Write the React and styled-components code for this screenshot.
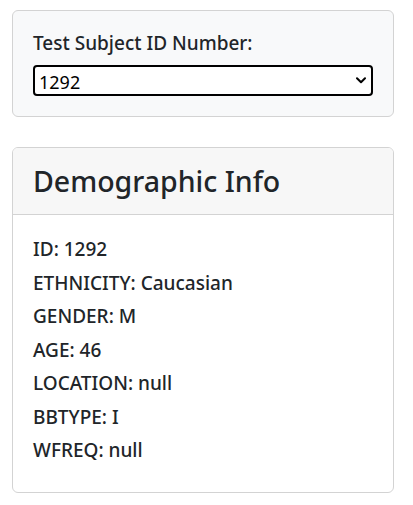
import React from 'react';
import styled, { createGlobalStyle } from 'styled-components';

const GlobalStyle = createGlobalStyle`
   * {
      box-sizing: border-box;
   }

   body {
      margin: 0;
      background: #fff;
      color: #212529;
      font-family: "Noto Sans", "Open Sans", sans-serif;
   }
`;

const subject = {
   id: 1292,
   ethnicity: 'Caucasian',
   gender: 'M',
   age: 46,
   location: null,
   bbtype: 'I',
   wfreq: null,
};

export default function App() {
   const rows = Object.entries(subject);

   return (
      <>
         <GlobalStyle />
         <Page>
            <Well>
               <Label htmlFor='selDataset'>Test Subject ID Number:</Label>
               <SelectWrap>
                  <Select id='selDataset' defaultValue='1292'>
                     <option value='1292'>1292</option>
                  </Select>
                  <Chevron width='10' height='7' viewBox='0 0 10 7'>
                     <path d='M1 1.2 L5 5.2 L9 1.2' fill='none' stroke='#000' strokeWidth='2' strokeLinecap='round' strokeLinejoin='round' />
                  </Chevron>
               </SelectWrap>
            </Well>

            <Card>
               <CardHeader>
                  <Title>Demographic Info</Title>
               </CardHeader>
               <CardBody>
                  {rows.map(([key, value]) => (
                     <Row key={key}>{key.toUpperCase()}: {value === null ? 'null' : value}</Row>
                  ))}
               </CardBody>
            </Card>
         </Page>
      </>
   );
}


// Styled components
const Page = styled.div`
   display: flex;
   flex-direction: column;
   gap: 30px;
   width: 382px;
   margin: 10px 0 0 12px;
`;

const Well = styled.div`
   display: flex;
   flex-direction: column;
   padding: 20px;
   background: #f8f9fa;
   border: 1px solid #d3d3d3;
   border-radius: 6px;
`;

const Label = styled.label`
   margin-bottom: 10px;
   font-size: 19px;
   line-height: 24px;
   font-weight: 500;
   color: #212529;
`;

const SelectWrap = styled.div`
   position: relative;
`;

const Select = styled.select`
   width: 100%;
   height: 31px;
   padding: 2px 24px 0 4px;
   appearance: none;
   background: #fff;
   border: 2px solid #000;
   border-radius: 4px;
   font-family: "Noto Sans", "Open Sans", sans-serif;
   font-size: 18px;
   color: #000;
   outline: none;
`;

const Chevron = styled.svg`
   position: absolute;
   top: 12px;
   right: 7px;
   pointer-events: none;
`;

const Card = styled.div`
   display: flex;
   flex-direction: column;
   border: 1px solid #d3d3d3;
   border-radius: 6px;
   overflow: hidden;
`;

const CardHeader = styled.div`
   height: 67px;
   display: flex;
   align-items: center;
   padding: 0 20px;
   background: #f7f7f7;
   border-bottom: 1px solid #d3d3d3;
`;

const Title = styled.h3`
   margin: 0;
   font-size: 28.5px;
   font-weight: 500;
   line-height: 1.2;
`;

const CardBody = styled.div`
   display: flex;
   flex-direction: column;
   padding: 18px 20px 24px;
`;

const Row = styled.h6`
   margin: 0;
   font-size: 19px;
   line-height: 33.5px;
   font-weight: 500;
`;
